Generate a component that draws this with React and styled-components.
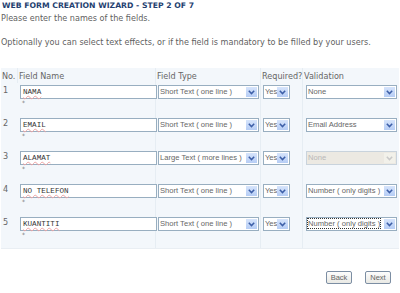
import styled, { createGlobalStyle } from "styled-components";

const Global = createGlobalStyle`
  html, body { margin: 0; padding: 0; background: #fff; }
  body { width: 400px; height: 293px; overflow: hidden; }
`;

const Page = styled.div`
  font-family: "DejaVu Sans", Verdana, sans-serif;
  font-size: 8.1px;
  color: #5f5f5f;
  padding-left: 1px;
`;

const Title = styled.div`
  font-weight: bold;
  font-size: 7.7px;
  color: #23406f;
  height: 12px;
  line-height: 12px;
  padding-left: 1px;
`;

const Line = styled.div`
  height: 12px;
  line-height: 12px;
`;

const Panel = styled.div`
  margin-top: 20px;
  width: 398px;
  background: #f3f7fb;
  border-bottom: 1px solid #e9eef3;
`;

const Row = styled.div`
  display: grid;
  grid-template-columns: 17px 138px 105px 42px 96px;
  height: ${(p) => p.$h}px;
`;

const Cell = styled.div`
  border-right: 1px solid #e6edf3;
  padding: ${(p) => (p.$head ? "3px 0 0 1px" : "2px 0 0 1px")};
  line-height: ${(p) => (p.$head ? "10px" : "normal")};
  white-space: nowrap;
  color: #666;
  &:last-child { border-right: 0; }
`;

const Num = styled.div`
  padding: 2px 0 0 2px;
  line-height: 10px;
  color: #666;
`;

const TextBox = styled.div`
  width: 133px;
  height: 12px;
  border: 1px solid #98aec0;
  background: #fff;
  font-family: "Liberation Mono", "DejaVu Sans Mono", monospace;
  font-size: 7.6px;
  line-height: 12px;
  color: #333;
  padding-left: 2px;
  box-sizing: content-box;
  margin-left: 1px;
  span {
    text-decoration: underline wavy #eda3a3;
    text-decoration-thickness: 1px;
    text-underline-offset: 1px;
  }
`;

const Star = styled.div`
  font-size: 6px;
  line-height: 6px;
  padding-left: 3px;
  margin-top: 1px;
  color: #777;
`;

const Select = styled.div`
  display: flex;
  width: ${(p) => p.$w}px;
  height: 12px;
  border: 1px solid ${(p) => (p.$off ? "#c9d3dc" : "#98aec0")};
  background: ${(p) => (p.$off ? "#ece9e2" : "#fff")};
  margin-left: ${(p) => p.$ml || 1}px;
  box-sizing: content-box;
  overflow: hidden;
`;

const SelText = styled.div`
  flex: 1;
  font-family: "Liberation Sans", Arial, sans-serif;
  font-size: 7.6px;
  line-height: 12px;
  padding-left: 1px;
  white-space: nowrap;
  overflow: hidden;
  color: ${(p) => (p.$off ? "#b8b8b8" : "#666")};
  span {
    outline: ${(p) => (p.$focus ? "1px dotted #333" : "none")};
  }
`;

const Arrow = styled.div`
  width: 11px;
  height: 10px;
  margin: 1px 1px 1px 0;
  background: ${(p) => (p.$off ? "#f2f1ea" : "linear-gradient(#d6e4fb, #b6cdf5)")};
  display: flex;
  align-items: center;
  justify-content: center;
  flex: none;
`;

const Footer = styled.div`
  display: flex;
  justify-content: flex-end;
  gap: 13px;
  margin-top: 22px;
  padding-right: 9px;
`;

const Button = styled.div`
  height: 11px;
  line-height: 11px;
  padding: 0 3px;
  border: 1px solid #7c8ea3;
  border-radius: 2px;
  background: linear-gradient(#fdfdfd, #e9e9e4);
  font-family: "Liberation Sans", Arial, sans-serif;
  font-size: 7.5px;
  color: #666;
  min-width: 18px;
  text-align: center;
`;

function Chevron({ off }) {
  return (
    <svg width="7" height="5" viewBox="0 0 7 5">
      <path
        d="M0.8 0.8 L3.5 3.6 L6.2 0.8"
        fill="none"
        stroke={off ? "#c9c9c9" : "#3d5fa8"}
        strokeWidth="1.5"
      />
    </svg>
  );
}

function Drop({ w, ml, text, off, focus }) {
  return (
    <Select $w={w} $ml={ml} $off={off}>
      <SelText $off={off} $focus={focus}>
        <span>{text}</span>
      </SelText>
      <Arrow $off={off}>
        <Chevron off={off} />
      </Arrow>
    </Select>
  );
}

const fields = [
  { name: "NAMA", type: "Short Text ( one line )", valid: "None" },
  { name: "EMAIL", type: "Short Text ( one line )", valid: "Email Address" },
  { name: "ALAMAT", type: "Large Text ( more lines )", valid: "None", off: true },
  { name: "NO TELEFON", type: "Short Text ( one line )", valid: "Number ( only digits )" },
  { name: "KUANTITI", type: "Short Text ( one line )", valid: "Number ( only digits )", focus: true },
];

export default function App() {
  return (
    <Page>
      <Global />
      <Title>WEB FORM CREATION WIZARD - STEP 2 OF 7</Title>
      <Line>Please enter the names of the fields.</Line>
      <Line />
      <Line>Optionally you can select text effects, or if the field is mandatory to be filled by your users.</Line>
      <Panel>
        <Row $h={15}>
          <Cell $head>No.</Cell>
          <Cell $head>Field Name</Cell>
          <Cell $head>Field Type</Cell>
          <Cell $head>Required?</Cell>
          <Cell $head>Validation</Cell>
        </Row>
        {fields.map((f, i) => (
          <Row key={f.name} $h={33}>
            <Num>{i + 1}</Num>
            <Cell>
              <TextBox>
                <span>{f.name}</span>
              </TextBox>
              <Star>*</Star>
            </Cell>
            <Cell>
              <Drop w={99} text={f.type} />
            </Cell>
            <Cell>
              <Drop w={25} text="Yes" />
            </Cell>
            <Cell>
              <Drop w={89} ml={2} text={f.valid} off={f.off} focus={f.focus} />
            </Cell>
          </Row>
        ))}
      </Panel>
      <Footer>
        <Button>Back</Button>
        <Button>Next</Button>
      </Footer>
    </Page>
  );
}
